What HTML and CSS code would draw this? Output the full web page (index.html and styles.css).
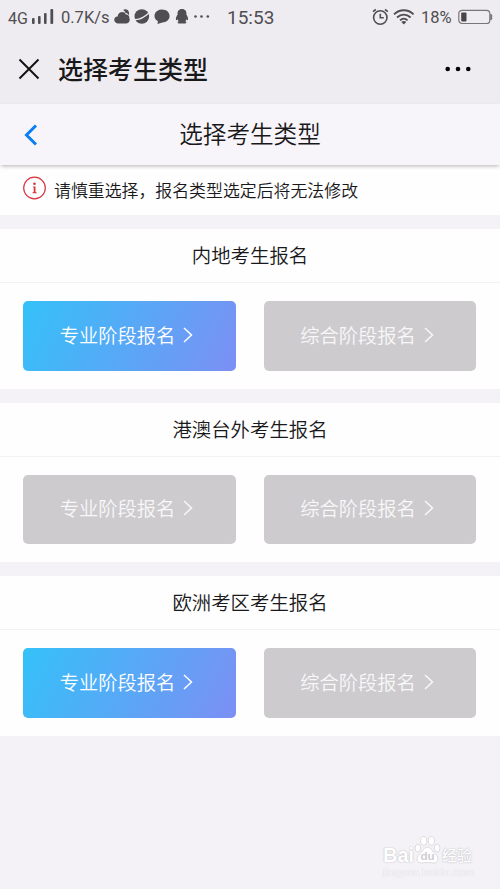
FILE: index.html
```
<!DOCTYPE html>
<html lang="zh-CN">
<head>
<meta charset="utf-8">
<title>选择考生类型</title>
<link rel="stylesheet" href="styles.css">
</head>
<body>
<header class="status">
  <span class="network">4G</span>
  <svg class="signal" width="22" height="16" viewBox="0 0 22 16" fill="currentColor"><rect x="0" y="9" width="2.6" height="6" rx="1"/><rect x="6" y="7" width="2.6" height="8" rx="1"/><rect x="12" y="4" width="2.6" height="11" rx="1"/><rect x="18.4" y="0" width="2.8" height="15" rx="1"/></svg>
  <span class="speed">0.7K/s</span>
  <svg class="apps" width="97" height="18" viewBox="0 0 97 18">
    <g fill="currentColor">
      <path d="M3.800 15.500C-.8 14.700-1 8.900 3.600 8.500 4.200 3.300 10.600 2.700 12 6.500c3 .1 3.600 2.200 3.200 3.500 1.500 2-.1 5.500-2.700 5.500Z"/>
      <path d="M9 2c3.200-2.300 7.400.8 5.700 5.200C13.800 5 12 4.900 11.500 4.900 11 3.300 10 2.500 9 2Z"/>
      <circle cx="27.800" cy="8.500" r="7.300"/>
      <path d="M48 1.500c4.400 0 7.600 2.800 7.600 6.500 0 4.200-3.700 6.300-7.200 6.400L43.500 16l.4-2.800C37.800 10 40.200 1.500 48 1.500Z"/>
      <path d="M68 1c-3.300 0-4.700 2.300-4.400 5.500-1.700 2.400-2 4.600-1.500 5.500.4.400 1-.1 1.500-.8.100.8.500 1.500 1 2-1.500.8-1.300 2.200.6 2.200h5.700c1.800 0 2-1.400.5-2.200.5-.6.900-1.200 1-2 .5.800 1.200 1.200 1.500.8.400-.9.100-3.200-1.500-5.500C72.700 3.300 71.300 1 68 1Z"/>
      <circle cx="81.500" cy="8.500" r="1.300"/><circle cx="87.500" cy="8.500" r="1.300"/><circle cx="93.800" cy="8.500" r="1.300"/>
    </g>
    <path d="M20.500 11.500c4 .5 9.500-2 14.500-6.500" fill="none" stroke="#eeecf0" stroke-width="1.300"/>
  </svg>
  <span class="clock">15:53</span>
  <svg class="alarm" width="17" height="18" viewBox="0 0 17 18" fill="none" stroke="currentColor" stroke-width="1.600"><circle cx="8.300" cy="9.500" r="6.700"/><path d="M8.300 5.700v4h3.500M1 3.700 3.800 1.500M13 1.500l2.800 2.200"/></svg>
  <svg class="wifi" width="22" height="16" viewBox="0 0 22 16" fill="none" stroke="currentColor" stroke-width="1.800"><path d="M1 5.300c5.600-5.400 14-5.400 19.600 0M4 8.500c4-3.900 9.600-3.900 13.600 0M7 11.400c2.300-2.200 5.300-2.200 7.600 0"/><path d="m8.300 13 2.500 2.500 2.500-2.500c-1.500-1.400-3.500-1.400-5 0Z" fill="currentColor" stroke="none"/></svg>
  <span class="percent">18%</span>
  <svg class="battery" width="35" height="16" viewBox="0 0 35 16"><rect x=".8" y="1.300" width="31" height="13.200" rx="3.300" fill="none" stroke="#777578" stroke-width="1.200"/><rect x="3.200" y="3.500" width="5.300" height="9" rx="1" fill="#464447"/><path d="M32.200 5h.8q1.200 0 1.200 1.500v3Q34.200 11 33 11h-.8Z" fill="#777578"/></svg>
</header>
<div class="titlebar">
  <svg width="22" height="22" viewBox="0 0 22 22" fill="none" stroke="#111" stroke-width="1.900"><path d="m1.500 1.500 19 19M20.500 1.500l-19 19"/></svg>
  <h1>选择考生类型</h1>
  <svg class="more" width="26" height="6" viewBox="0 0 26 6" fill="#050505"><circle cx="2.700" cy="3" r="2.300"/><circle cx="13" cy="3" r="2.300"/><circle cx="23.300" cy="3" r="2.300"/></svg>
</div>
<nav class="nav">
  <svg width="14" height="22" viewBox="0 0 14 22" fill="none" stroke="#087ff5" stroke-width="3"><path d="M12 1.500 2.500 11l9.500 9.500"/></svg>
  <h2>选择考生类型</h2>
</nav>
<p class="notice">
  <svg width="24" height="24" viewBox="0 0 24 24"><circle cx="11.500" cy="12" r="10.800" fill="none" stroke="#d9333c" stroke-width="1.200"/><circle cx="11.500" cy="7.700" r="1.300" fill="#d9333c"/><path d="M9.800 10.500h2.700v5.500l1.200.6v.6H9.500v-.6l1.200-.6v-4.500l-.9-.4Z" fill="#d9333c"/></svg>
  <span>请慎重选择，报名类型选定后将无法修改</span>
</p>
<main class="groups">
  <section class="group">
    <h3>内地考生报名</h3>
    <div class="choices">
      <button class="choice active">专业阶段报名<svg class="arrow" viewBox="0 0 10 16"><path d="m1 1 7.500 7L1 15"/></svg></button>
      <button class="choice">综合阶段报名<svg class="arrow" viewBox="0 0 10 16"><path d="m1 1 7.500 7L1 15"/></svg></button>
    </div>
  </section>
  <section class="group">
    <h3>港澳台外考生报名</h3>
    <div class="choices">
      <button class="choice">专业阶段报名<svg class="arrow" viewBox="0 0 10 16"><path d="m1 1 7.500 7L1 15"/></svg></button>
      <button class="choice">综合阶段报名<svg class="arrow" viewBox="0 0 10 16"><path d="m1 1 7.500 7L1 15"/></svg></button>
    </div>
  </section>
  <section class="group">
    <h3>欧洲考区考生报名</h3>
    <div class="choices">
      <button class="choice active">专业阶段报名<svg class="arrow" viewBox="0 0 10 16"><path d="m1 1 7.500 7L1 15"/></svg></button>
      <button class="choice">综合阶段报名<svg class="arrow" viewBox="0 0 10 16"><path d="m1 1 7.500 7L1 15"/></svg></button>
    </div>
  </section>
</main>
<div class="watermark">
  <div class="brand">
    <span class="bai">Bai</span>
    <svg width="27" height="30" viewBox="0 0 28 30" fill="#fff" stroke="#d3d1d6" stroke-width=".8"><ellipse cx="4" cy="13" rx="2.900" ry="4"/><ellipse cx="10" cy="5.500" rx="3.200" ry="4.500"/><ellipse cx="18" cy="5.500" rx="3.200" ry="4.500"/><ellipse cx="24" cy="13" rx="2.900" ry="4"/><path d="M14 12c-4 0-5 5-8.500 7.500C1 23.500 3.500 29 8 28.500c4-.6 8-.6 12 0 4.500.5 7-5 2.500-9C19 17 18 12 14 12Z"/><text x="14" y="25.500" text-anchor="middle" class="du">du</text></svg>
    <span class="jingyan">经验</span>
  </div>
  <div class="site">jingyan.baidu.com</div>
</div>
</body>
</html>
```
FILE: styles.css
```
* { box-sizing: border-box; }
body {
  margin: 0;
  height: 889px;
  overflow: hidden;
  background: #f4f2f6;
  color: #19181a;
  font-family: "Noto Sans CJK SC", sans-serif;
}
h1, h2, h3, p { margin: 0; font-weight: 400; }
svg { display: block; flex: none; }

.status {
  display: flex;
  align-items: center;
  height: 34px;
  padding-left: 8px;
  background: #eeecf0;
  color: #504e52;
  font-family: Roboto, sans-serif;
  white-space: nowrap;
}
.network { width: 24px; font-size: 16px; padding-top: 2px; }
.signal { margin-top: -1px; }
.speed { width: 48px; margin-left: 7px; font-size: 16.500px; }
.apps { margin-left: 5px; }
.clock { width: 48px; margin-left: 16px; font-size: 19px; }
.alarm { margin-left: 97px; }
.wifi { margin-left: 4px; }
.percent { width: 32px; margin-left: 6px; font-size: 16.500px; }
.battery { margin-left: 5px; }

.titlebar {
  display: flex;
  align-items: center;
  height: 70px;
  padding: 0 29px 0 18px;
  background: #eeecf0;
}
.titlebar h1 { margin: -2px 0 0 18px; font-size: 25px; font-weight: 500; line-height: 36px; }
.more { margin-left: auto; }

.nav {
  position: relative;
  display: grid;
  grid-template-columns: 14px 1fr 14px;
  align-items: center;
  height: 61px;
  padding: 0 24px;
  background: #f7f5f9;
  box-shadow: 0 2px 4px -1px rgba(0, 0, 0, .3);
}
.nav h2 { text-align: center; font-size: 23.600px; font-weight: 350; line-height: 34px; margin-top: -4px; }

.notice {
  display: flex;
  align-items: center;
  height: 50px;
  padding: 0 22px 4px 23px;
  background: #fefefe;
  font-size: 16.900px;
  font-weight: 350;
}
.notice span { margin-left: 7px; padding-top: 2px; }

.groups { display: grid; gap: 14px; padding-top: 14px; }
.group { height: 159.500px; background: #fefefe; }
.group h3 {
  height: 54px;
  border-bottom: 1px solid #f3f1f5;
  text-align: center;
  font-size: 19.400px;
  font-weight: 350;
  line-height: 52px;
}
.choices { display: grid; grid-template-columns: 213fr 212fr; gap: 28px; padding: 18px 24px 0 23px; }
.choice {
  display: flex;
  align-items: center;
  justify-content: center;
  height: 69.500px;
  padding: 0 6px 2px 0;
  border: 0;
  border-radius: 5px;
  background: #cdcbce;
  color: #f8f7f9;
  font-family: inherit;
  font-size: 19.300px;
  font-weight: 350;
}
.choice.active { background: linear-gradient(115deg, #34c1f8, #7c8ff4); color: #fff; }
.arrow { width: 10px; height: 16px; margin-left: 8px; fill: none; stroke: currentColor; stroke-width: 1.500; }

.watermark {
  position: absolute;
  left: 383px;
  top: 835px;
  width: 92px;
  color: #fff;
  text-shadow: 0 0 1px #b5b3b8, 0 0 2px #d0ced3;
}
.brand { display: flex; align-items: flex-end; height: 30px; }
.bai { width: 31px; font: 700 20px/20px "Liberation Sans", sans-serif; }
.du { font: 700 12px "Liberation Sans", sans-serif; fill: #cfcdd2; stroke: none; text-shadow: none; }
.jingyan { font-size: 15px; font-weight: 500; line-height: 20px; margin-left: 1px; }
.site { font: 11.300px/14px "Liberation Sans", sans-serif; color: #f9f8fa; text-shadow: 0 0 1px #c9c7cc; }
```
